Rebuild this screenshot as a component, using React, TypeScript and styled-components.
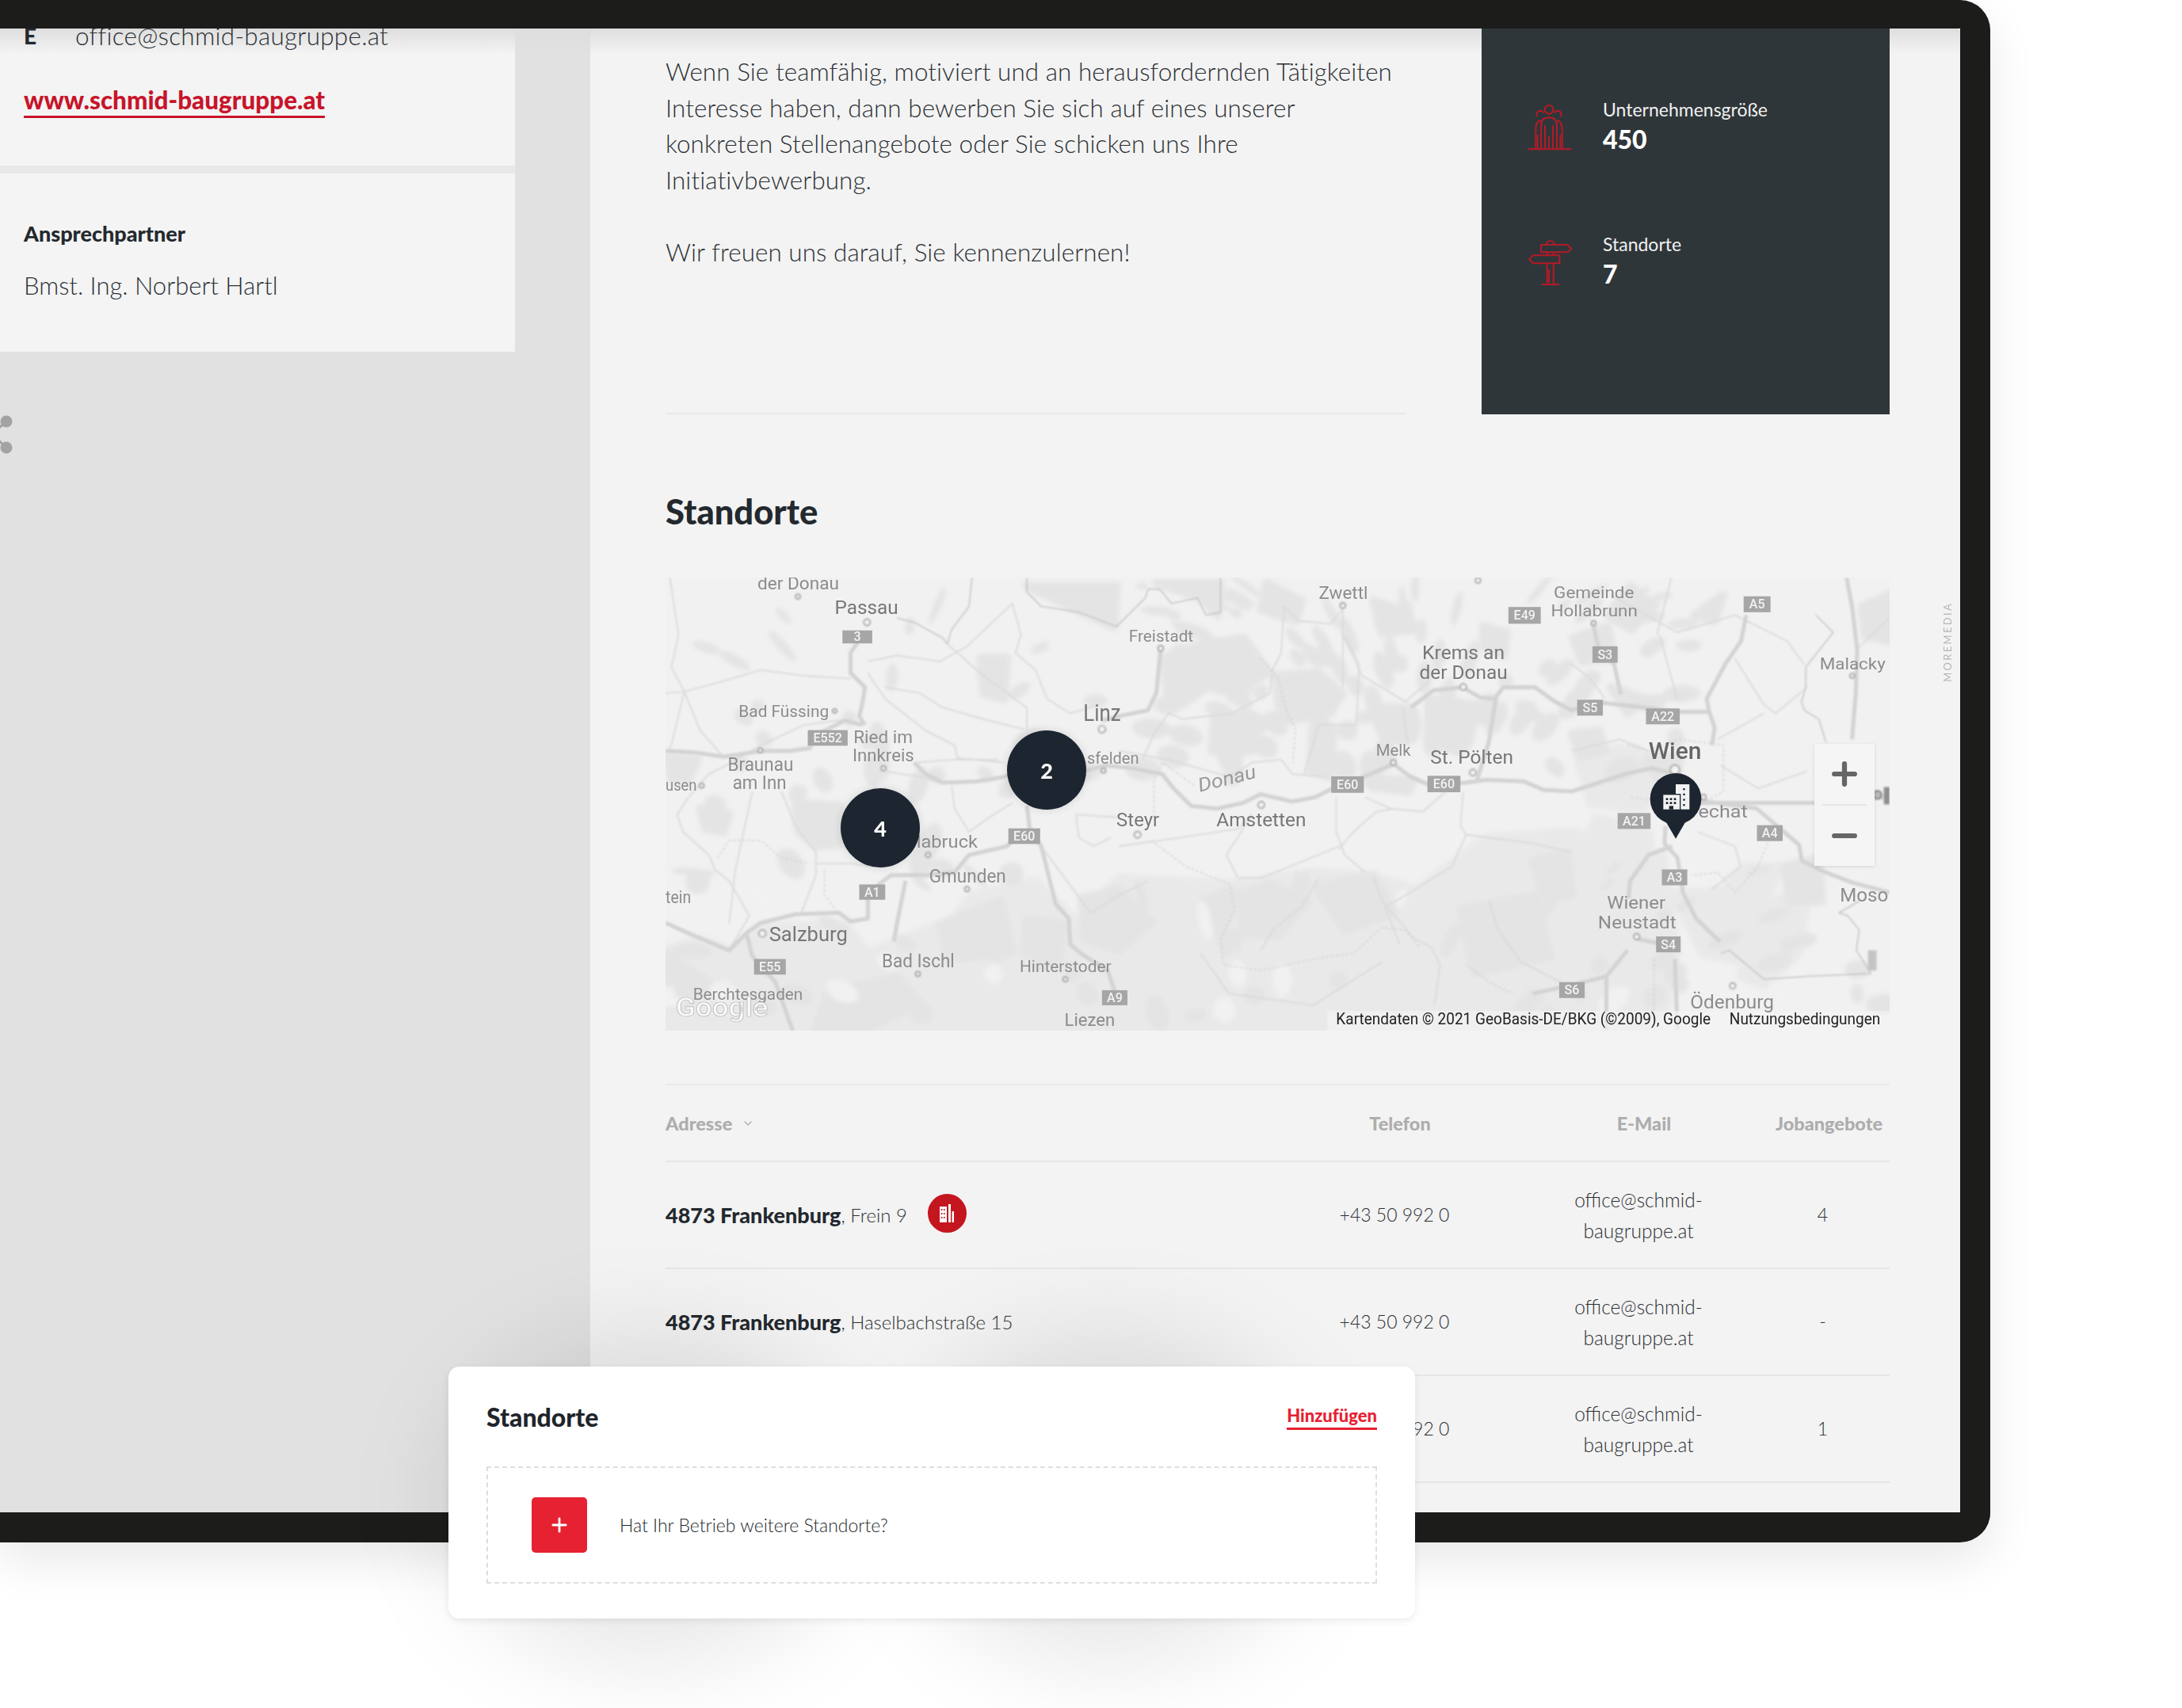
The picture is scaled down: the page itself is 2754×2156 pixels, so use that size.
import React from 'react'
import styled, { createGlobalStyle } from 'styled-components'
import { ChevronDown, Plus, Minus } from 'lucide-react'

const GlobalStyle = createGlobalStyle`
  html, body { margin: 0; padding: 0; background: #fff; }
  body { font-family: Lato, "Open Sans", sans-serif; color: #2b3034; }
`

/* map data, in units of a 4235x1568 canvas */
type Label = { t: string; x: number; y: number; w: number; s: number; c?: string; fw?: number }

const labels: Label[] = [
  { t: 'der Donau', x: 318, y: 42, w: 282, s: 54 },
  { t: 'Passau', x: 585, y: 125, w: 220, s: 60, c: '#777' },
  { t: 'Bad Füssing', x: 253, y: 483, w: 312, s: 52 },
  { t: 'Ried im', x: 650, y: 573, w: 205, s: 56 },
  { t: 'Innkreis', x: 647, y: 637, w: 213, s: 56 },
  { t: 'Braunau', x: 215, y: 668, w: 227, s: 58 },
  { t: 'am Inn', x: 232, y: 731, w: 186, s: 58 },
  { t: 'usen', x: 0, y: 738, w: 108, s: 52 },
  { t: 'Linz', x: 1445, y: 495, w: 130, s: 72, c: '#777' },
  { t: 'sfelden', x: 1458, y: 645, w: 180, s: 52 },
  { t: 'labruck', x: 868, y: 935, w: 212, s: 56 },
  { t: 'Gmunden', x: 912, y: 1055, w: 266, s: 58 },
  { t: 'tein', x: 0, y: 1128, w: 88, s: 56 },
  { t: 'Salzburg', x: 358, y: 1258, w: 272, s: 66, c: '#777' },
  { t: 'Bad Ischl', x: 748, y: 1348, w: 252, s: 58 },
  { t: 'Hinterstoder', x: 1225, y: 1365, w: 317, s: 50 },
  { t: 'Berchtesgaden', x: 95, y: 1462, w: 380, s: 50 },
  { t: 'Liezen', x: 1380, y: 1552, w: 175, s: 54 },
  { t: 'Steyr', x: 1560, y: 862, w: 148, s: 60, c: '#777' },
  { t: 'Amstetten', x: 1906, y: 860, w: 310, s: 60, c: '#777' },
  { t: 'Freistadt', x: 1603, y: 222, w: 223, s: 50 },
  { t: 'Zwettl', x: 2260, y: 73, w: 170, s: 56 },
  { t: 'Melk', x: 2458, y: 617, w: 120, s: 50 },
  { t: 'St. Pölten', x: 2646, y: 645, w: 287, s: 58, c: '#777' },
  { t: 'Krems an', x: 2618, y: 282, w: 285, s: 58, c: '#777' },
  { t: 'der Donau', x: 2608, y: 350, w: 305, s: 58, c: '#777' },
  { t: 'Gemeinde', x: 3073, y: 72, w: 278, s: 50 },
  { t: 'Hollabrunn', x: 3063, y: 135, w: 300, s: 50 },
  { t: 'Malacky', x: 3993, y: 317, w: 228, s: 52 },
  { t: 'Wien', x: 3401, y: 628, w: 183, s: 74, c: '#666', fw: 500 },
  { t: 'Wiener', x: 3257, y: 1147, w: 203, s: 56 },
  { t: 'Neustadt', x: 3226, y: 1215, w: 271, s: 56 },
  { t: 'echat', x: 3573, y: 832, w: 171, s: 54 },
  { t: 'Moso', x: 4063, y: 1120, w: 167, s: 58 },
  { t: 'Ödenburg', x: 3545, y: 1490, w: 290, s: 58 },
]

const shields: [string, number, number, number, number][] = [
  ['3', 612, 183, 715, 228],
  ['E552', 492, 528, 630, 582],
  ['E60', 1186, 868, 1296, 922],
  ['A1', 670, 1062, 760, 1115],
  ['E55', 306, 1320, 416, 1374],
  ['A9', 1510, 1428, 1598, 1480],
  ['E49', 2916, 102, 3028, 160],
  ['E60', 2303, 688, 2416, 745],
  ['E60', 2636, 686, 2750, 743],
  ['S6', 3092, 1400, 3180, 1455],
  ['S3', 3207, 238, 3294, 295],
  ['S5', 3154, 423, 3243, 478],
  ['A22', 3392, 453, 3509, 508],
  ['A5', 3730, 65, 3823, 120],
  ['A21', 3294, 815, 3408, 870],
  ['A4', 3776, 857, 3865, 912],
  ['A3', 3447, 1010, 3535, 1065],
  ['S4', 3427, 1242, 3512, 1297],
]

const places: [number, number, number][] = [
  [458, 66, 8], [697, 155, 11], [585, 462, 7], [328, 598, 8], [125, 720, 8], [754, 660, 8],
  [1510, 525, 12], [1515, 668, 8], [908, 960, 8], [1043, 1078, 8], [335, 1232, 12], [873, 1372, 8],
  [1383, 1390, 8], [1713, 245, 9], [2343, 97, 9], [2811, 10, 9], [2061, 787, 11], [1633, 890, 11],
  [2518, 640, 9], [2793, 675, 11], [2760, 379, 11], [3211, 158, 8], [3492, 665, 16], [4106, 340, 8],
  [3360, 1243, 10], [3692, 1413, 10], [3591, 760, 9],
]

const bigRoads: string[] = [
  '665,225 640,260 640,330 690,380 680,440 670,480 690,510',
  '0,600 100,605 200,620 270,610 330,600 430,600 500,590 520,545 620,495 680,510',
  '860,640 900,680 960,710 1080,705 1170,690 1200,680',
  '1250,790 1260,870 1300,930 1330,1050 1350,1130 1395,1180 1400,1270 1450,1310 1530,1360 1560,1450',
  '1240,880 1180,930 1050,960 1000,1020 900,1030 780,1030 740,1060 700,1110 700,1180 640,1190 600,1160 450,1165 330,1195 280,1230 220,1290 100,1240 0,1195',
  '1450,670 1520,650 1618,660 1718,680 1758,730 1818,790 1908,800 1998,780 2058,750 2168,775 2248,760 2308,730 2438,680 2518,645 2578,690 2648,720 2768,710 2838,700 2968,705 3038,735 3136,740 3320,680 3410,660 3492,680',
  '1713,250 1698,400 1668,460 1568,480 1510,495',
  '2578,450 2658,390 2758,380 2818,415 2868,420 2898,380 3008,380 3078,430 3136,460 3210,430 3390,450 3502,465 3611,465 3630,520 3620,580',
  '2873,420 2848,570 2808,700',
  '3739,130 3721,220 3666,300 3602,420 3611,465',
  '3211,170 3227,240 3282,300 3305,405',
  '3565,770 3776,800 3922,925 3931,980 4013,1020 4105,1055 4235,1090',
  '3570,780 3977,780 4235,760',
  '3460,860 3456,920 3501,970 3520,1090 3565,1180 3648,1260',
  '3483,930 3401,960 3337,1050 3332,1110',
  '3360,1250 3501,1280',
  '3328,1290 3255,1380 3136,1410 3000,1440',
  '3255,1380 3255,1568',
  '3492,1320 3501,1568',
  '4086,0 4105,100 4123,250 4118,400 4105,560',
  '280,1230 300,1310 380,1400 440,1568',
  '830,1050 800,1200 790,1260',
]

const thinRoads: string[] = [
  '0,400 65,395 230,350 330,320 480,340 640,350',
  '65,395 120,530 200,620',
  '15,0 45,200 20,310 65,395 20,580 10,600',
  '700,330 760,420 900,530 1000,580 1010,625 1170,640',
  '760,380 880,400 960,450 1100,490 1240,525',
  '700,290 800,270 950,290 1040,240 1200,90 1230,200 1210,260 1280,320 1320,420 1400,470 1500,440',
  '975,230 1100,340 1250,450 1250,530',
  '630,490 480,510 330,580 210,650 150,680 80,760 40,820 60,880 150,960 170,1010 220,1050 290,1170 220,1290',
  '300,740 270,880 240,1020 220,1200',
  '400,740 450,860 520,950 520,1030 470,1160',
  '520,990 640,990 720,1000',
  '990,720 1000,800 1050,880 1120,830 1200,780',
  '870,640 1000,630 1150,630',
  '755,670 880,690 960,710',
  '1560,830 1420,820 1430,900 1480,930 1540,900',
  '1300,930 1470,1160 1568,1100 1670,1050',
  '1568,600 1740,630 1950,690 2030,640 2130,630 2170,680 2290,690',
  '1650,630 1690,540 1740,470 1790,490 1960,470 2090,400 2100,320 2130,260 2140,100 2190,150 2300,160 2343,110 2343,380',
  '1568,930 1780,900 1980,870 2030,820',
  '2030,820 1940,960 1980,1040 2060,1040 2160,1000 2330,930',
  '2320,760 2320,880 2350,960 2420,1020',
  '2420,760 2510,800 2620,810 2700,740',
  '2330,940 2380,880 2460,810 2520,800',
  '2760,740 2750,860 2770,890 3000,920 3136,950',
  '2770,890 2720,1000 2560,1100 2490,1140 2540,1270',
  '2260,1040 2200,1140 2100,1220 2060,1290',
  '2450,1040 2480,1120 2590,1250 2650,1280 2680,1340 2660,1480',
  '1850,1300 1950,1440 2240,1480 2480,1330',
  '2850,1120 2880,1220 2960,1330 3136,1420',
  '2640,360 2560,430 2410,340 2340,190',
  '2350,200 2400,300 2390,510 2260,510 2210,680',
  '2550,450 2570,580',
  '3136,600 3300,560 3400,600',
  '3136,300 3200,350 3250,420',
  '3270,60 3500,190 3700,130 3880,220 3940,300',
  '3700,280 3800,440 3840,470 3950,380',
  '3640,560 3800,470',
  '3650,650 3780,730 3950,670',
  '3570,880 3700,930 3720,1000 3620,1080',
  '3430,200 3480,0',
  '3440,200 3500,420',
  '4235,140 4120,250',
]

const borders: string[] = [
  '1250,0 1250,50 1300,100 1430,120 1560,170 1660,70 1670,40 1710,40 1750,90 1840,70 1870,130 1920,120 1920,0',
  '800,140 860,155 960,210 975,230 990,180 1050,100 1060,0',
  '3980,130 4040,190 4000,240 3945,310 3945,380 3930,430 3940,460 3990,490 4015,570',
  '3650,1300 3680,1290 3800,1390 3950,1380 4170,1370 4120,1290 4130,1220 4090,1170 4060,1160 4130,1120',
]

const dashes: string[] = [
  '180,970 220,910 330,910 400,970 500,990',
  '550,1010 550,1100 590,1150',
  '1690,830 1690,700 1720,640 1830,720',
  '1680,910 1800,1000 1950,1060 1970,1150 1920,1250 1930,1340 2060,1360 2240,1320 2380,1300 2480,1210 2560,1220 2610,1280',
  '2060,280 2120,350 2150,470 2180,520 2170,640',
  '3330,580 3400,600 3500,560 3660,580 3660,740 3590,780',
  '3340,760 3420,770',
  '3560,1030 3640,1020 3700,1090 3780,1000 3820,900',
  '3420,1320 3420,1500',
  '2770,1340 2850,1400 2930,1440',
]

const lightPatches: string[] = [
  '0,1290 120,1250 220,1290 340,1210 620,1200 700,1300 1000,1180 1060,1100 1280,1050 1420,1190 1568,1040 1960,1060 2240,1020 2430,1030 2600,1080 2840,900 3136,880 3450,960 3500,1300 3450,1568 0,1568',
  '3600,1100 3740,1000 3860,1000 3780,1170 3640,1190',
  '3480,1090 3780,1090 3720,1330 3590,1300',
  '3780,1150 3960,1050 3920,1300 3800,1410 3720,1380',
  '3150,600 3360,590 3460,720 3380,800 3200,780',
  '3220,830 3400,880 3420,1040 3300,1100 3150,1020',
]

const darkPatches: string[] = [
  '450,780 600,790 620,920 520,930 460,880',
  '1720,280 1850,230 2000,210 2090,330 1990,380 1870,380 1790,440 1740,420',
  '2110,340 2260,330 2340,400 2300,470 2130,500',
  '1900,480 2020,470 2060,590 1980,610 1890,600',
  '2240,520 2310,520 2300,690 2230,670',
  '2440,450 2570,450 2570,560 2490,570',
  '2640,420 2810,440 2780,570 2640,540',
  '1250,30 1420,110 1550,170 1560,30',
  '1700,20 1920,20 1910,130 1850,70',
  '2080,20 2200,80 2180,150 2060,110',
  '2450,80 2570,120 2590,180 2480,190',
  '2830,170 2910,190 2900,270 2830,240',
  '3140,210 3260,170 3280,280 3170,290',
  '3340,30 3420,100 3340,180 3260,130',
  '3270,380 3390,420 3330,470',
  '3560,130 3660,60 3630,150',
  '3400,620 3510,620 3500,690 3430,700',
  '3136,540 3230,530 3250,600 3170,620',
  '2480,700 2590,700 2570,740 2480,730',
  '0,620 110,630 80,700 20,700',
  '120,800 220,820 200,880 140,870',
  '1090,280 1180,280 1170,420 1100,400',
  '0,1300 150,1400 60,1490 0,1480',
  '1980,1100 2090,1060 2220,1120 2120,1240 2000,1230',
  '2250,1070 2450,1030 2520,1160 2350,1220',
  '2750,1150 3010,1100 3060,1310 2800,1370',
  '3000,980 3120,950 3136,1100 3040,1100',
  '1250,1180 1380,1200 1360,1330 1240,1300',
  '560,1440 800,1380 880,1470 700,1560 520,1560',
  '950,1200 1160,1120 1200,1300 980,1320',
  '1860,1120 1960,1080 1950,1180 1860,1200',
  '1440,1110 1568,1080 1680,1190 1570,1290 1450,1250',
  '3870,1000 3990,970 4000,1120 3890,1120',
  '4140,100 4235,60 4235,220 4150,200',
]

// small forest specks, fixed pseudo random so the map looks the same every run
const frac = (n: number) => n - Math.floor(n)
const specks = Array.from({ length: 230 }, (_, i) => {
  const a = frac(Math.sin(i * 12.9898) * 43758.5453)
  const b = frac(Math.sin(i * 78.233) * 12543.123)
  const c = frac(Math.sin(i * 39.425) * 9631.77)
  const north = i < 110
  const west = i >= 190
  return {
    x: west ? a * 1500 : north ? 1650 + a * 1900 : a * 4235,
    y: west ? 60 + b * 1000 : north ? 30 + b * 660 : 1000 + b * 560,
    rx: 22 + c * 48,
    ry: 12 + b * 30,
    rot: a * 180,
    light: i % 4 === 0 && !north && !west,
  }
})

type Pin = { n: string; x: number; y: number }
const clusters: Pin[] = [
  { n: '4', x: 271, y: 316 },
  { n: '2', x: 481, y: 243 },
]

const rows = [
  { city: '4873 Frankenburg', street: 'Frein 9', jobs: '4', hq: true },
  { city: '4873 Frankenburg', street: 'Haselbachstraße 15', jobs: '-' },
  { city: '4873 Frankenburg', street: 'Frein 9', jobs: '1' },
]

const Page = styled.div`
  position: relative;
  width: 2754px;
  height: 2156px;
  overflow: hidden;
  background: #fff;
`

const Device = styled.div`
  box-sizing: border-box;
  width: 2512px;
  height: 1947px;
  border-style: solid;
  border-color: #1c1c1b;
  border-width: 36px 38px 38px 0;
  border-radius: 0 38px 38px 0;
  box-shadow: 0 24px 60px rgba(0, 0, 0, 0.09);
`

const Screen = styled.div`
  position: relative;
  display: flex;
  height: 100%;
  overflow: hidden;
  border-radius: 0 4px 4px 0;
  background: #f3f3f3;

  &::after {
    content: '';
    position: absolute;
    inset: 0 0 auto 0;
    height: 32px;
    background: linear-gradient(#dedede, rgba(222, 222, 222, 0));
    pointer-events: none;
  }
`

const Sidebar = styled.aside`
  position: relative;
  flex: 0 0 745px;
  background: #e1e1e1;
`

const SideCard = styled.section<{ $height: number }>`
  box-sizing: border-box;
  width: 650px;
  height: ${p => p.$height}px;
  padding-left: 30px;
  background: #f4f4f4;
  overflow: hidden;
`

const CardGap = styled.div`
  width: 650px;
  height: 10px;
  background: #e8e8e8;
`

const ContactRow = styled.div`
  position: relative;
  z-index: 1;
  display: flex;
  margin-top: -15px;
  font-size: 31.5px;
  line-height: 48px;
  font-weight: 300;
  letter-spacing: 0.25px;
`

const ContactKey = styled.b`
  width: 65px;
  font-weight: 900;
  font-size: 28px;
  color: #23292e;
`

const SiteLink = styled.a`
  display: inline-block;
  margin-top: 37px;
  font-size: 31.4px;
  line-height: 40px;
  font-weight: 900;
  color: #c8142a;
  border-bottom: 3px solid #c8142a;
`

const PersonTitle = styled.div`
  margin-top: 59px;
  font-size: 27px;
  line-height: 34px;
  font-weight: 900;
  color: #23292e;
`

const PersonName = styled.div`
  margin-top: 30px;
  font-size: 31px;
  line-height: 36px;
  font-weight: 300;
`

const ShareIcon = styled.svg`
  position: absolute;
  left: 0;
  top: 485px;
`

const Main = styled.main`
  flex: 1;
  padding: 0 89px 0 95px;
  min-width: 0;
`

const TopRow = styled.div`
  display: flex;
  gap: 95px;
  height: 487px;
`

const Intro = styled.div`
  box-sizing: border-box;
  width: 935px;
  padding-top: 32px;
  border-bottom: 2px solid #e8e8e8;
`

const Paragraph = styled.p`
  margin: 0 0 46px;
  font-size: 31.4px;
  line-height: 45.6px;
  font-weight: 300;
  letter-spacing: 0.08px;
`

const FactPanel = styled.div`
  position: relative;
  z-index: 2;
  box-sizing: border-box;
  flex: 1;
  padding: 84px 0 0 40px;
  background: #2f3639;
  color: #f1f1f1;
`

const Fact = styled.div`
  display: flex;
  align-items: flex-start;
  gap: 23px;
  height: 90px;
  margin-bottom: 80px;
`

const FactLabel = styled.div`
  font-size: 23px;
  line-height: 36px;
  font-weight: 400;
`

const FactValue = styled.div`
  font-size: 32px;
  line-height: 40px;
  font-weight: 900;
  color: #fff;
`

const SectionTitle = styled.h2`
  margin: 97px 0 59px;
  font-size: 43.5px;
  line-height: 50px;
  font-weight: 900;
  color: #23292e;
`

const MapBox = styled.div`
  position: relative;
  height: 572px;
  overflow: hidden;
  background: #f1f1f1;
`

const MapArt = styled.svg`
  display: block;
  font-family: Roboto, "Liberation Sans", sans-serif;
`

const MapLabel = styled.text<{ $fill?: string }>`
  fill: ${p => p.$fill ?? '#8c8c8c'};
`

const ShieldText = styled.text`
  fill: #f3f3f3;
  font-size: 44px;
  font-weight: 500;
  text-anchor: middle;
`

const Cluster = styled.div`
  position: absolute;
  display: flex;
  align-items: center;
  justify-content: center;
  width: 100px;
  height: 100px;
  margin: -50px 0 0 -50px;
  border-radius: 50%;
  background: #1c2530;
  box-shadow: 0 0 12px rgba(0, 0, 0, 0.12);
  color: #fff;
  font-size: 27px;
  font-weight: 900;
`

const BuildingPin = styled.svg`
  position: absolute;
  left: 1230px;
  top: 231px;
`

const ZoomBox = styled.div`
  position: absolute;
  right: 19px;
  top: 210px;
  display: flex;
  flex-direction: column;
  width: 76px;
  height: 154px;
  background: #f5f5f5;
  box-shadow: 0 1px 4px rgba(0, 0, 0, 0.12);
  color: #666;
`

const ZoomButton = styled.div`
  flex: 1;
  display: flex;
  align-items: center;
  justify-content: center;

  & + & {
    margin: 0 10px;
    border-top: 2px solid #e6e6e6;
  }
`

const Table = styled.div`
  margin-top: 67px;
  border-top: 2px solid #e9e9e9;
`

const Row = styled.div<{ $height: number }>`
  box-sizing: border-box;
  display: grid;
  grid-template-columns: 760px 320px 296px 169px;
  align-items: center;
  height: ${p => p.$height}px;
  border-bottom: 2px solid #e6e6e6;
`

const HeadCell = styled.div<{ $shift?: number }>`
  display: flex;
  align-items: center;
  justify-content: ${p => (p.$shift === undefined ? 'flex-start' : 'center')};
  gap: 12px;
  padding-left: ${p => p.$shift ?? 0}px;
  font-size: 23.5px;
  font-weight: 900;
  color: #adadad;
`

const AddressCell = styled.div`
  display: flex;
  align-items: center;
  font-size: 24px;
  font-weight: 300;
`

const City = styled.b`
  font-size: 27px;
  font-weight: 900;
  color: #23292e;
`

const Comma = styled.span`
  white-space: pre;
`

const HqBadge = styled.span`
  display: flex;
  align-items: center;
  justify-content: center;
  width: 49px;
  height: 49px;
  margin: -4px 0 0 26px;
  border-radius: 50%;
  background: #c4161f;
`

const Cell = styled.div<{ $size?: number }>`
  justify-self: center;
  max-width: 190px;
  text-align: center;
  font-size: ${p => p.$size ?? 23}px;
  line-height: 39px;
  font-weight: 300;
`

const ShadowBlob = styled.div<{ $left: number }>`
  position: absolute;
  left: ${p => p.$left}px;
  top: 1680px;
  width: 520px;
  height: 420px;
  border-radius: 50%;
  background: rgba(0, 0, 0, 0.09);
  filter: blur(60px);
`

const FormCard = styled.section`
  position: absolute;
  left: 566px;
  top: 1725px;
  box-sizing: border-box;
  width: 1220px;
  height: 318px;
  padding: 44px 48px 0;
  border-radius: 14px;
  background: #fff;
  box-shadow: 0 3px 10px rgba(0, 0, 0, 0.08);
`

const FormHead = styled.div`
  display: flex;
  justify-content: space-between;
  align-items: flex-start;
  height: 82px;
`

const FormTitle = styled.h3`
  margin: 0;
  font-size: 32px;
  line-height: 40px;
  font-weight: 900;
  color: #1f252b;
`

const AddLink = styled.a`
  margin-top: 3px;
  font-size: 22px;
  line-height: 30px;
  font-weight: 900;
  color: #e62132;
  border-bottom: 3px solid #e62132;
`

const DropZone = styled.div`
  box-sizing: border-box;
  display: flex;
  align-items: center;
  gap: 41px;
  height: 148px;
  padding-left: 55px;
  border: 2px dashed #dedede;
`

const AddButton = styled.div`
  display: flex;
  align-items: center;
  justify-content: center;
  width: 70px;
  height: 70px;
  border-radius: 5px;
  background: #e62132;
  color: #fff;
`

const DropText = styled.span`
  font-size: 23px;
  font-weight: 300;
  color: #23282c;
`

const Credit = styled.div`
  position: absolute;
  left: 2450px;
  top: 760px;
  writing-mode: vertical-rl;
  transform: rotate(180deg);
  font-size: 13px;
  letter-spacing: 2.3px;
  color: #b5b5b5;
`

function GroupIcon() {
  return (
    <svg width="90" height="90" viewBox="0 0 270 270" fill="none" stroke="#b51a28" strokeWidth="6">
      <path d="M55 205H220" />
      <circle cx="135" cy="55" r="16" />
      <path d="M115 68a14 14 0 1 0-24 14M155 68a14 14 0 1 1 24 14" />
      <path d="M105 205V115q0-30 30-30t30 30v90" />
      <path d="M120 205V115M150 205V115M135 205V155" />
      <path d="M105 95q-20 5-20 35v75M165 95q20 5 20 35v75" />
      <path d="M92 205V150M178 205V150" />
    </svg>
  )
}

function SignIcon() {
  return (
    <svg width="90" height="90" viewBox="0 0 270 270" fill="none" stroke="#b51a28" strokeWidth="6">
      <path d="M125 57a15 15 0 0 1 30 0" />
      <path d="M105 57H205L220 71 205 85H105Z" strokeLinejoin="round" />
      <path d="M175 97H75L60 112 75 127H175Z" strokeLinejoin="round" />
      <path d="M128 85V97M152 85V97M128 127V205M152 127V205M135 150V200" />
      <path d="M106 207H174" />
    </svg>
  )
}

function BuildingMini() {
  return (
    <svg width="22" height="26" viewBox="0 0 22 26" fill="#fff">
      <path d="M2 4h9v20H2zM13 1h3v23h-3zM17.5 10H20v14h-2.5z" />
      <path fill="#c4161f" d="M4 7h1.5v2H4zM7 7h1.5v2H7zM4 12h1.5v2H4zM7 12h1.5v2H7zM4 17h1.5v2H4zM7 17h1.5v2H7z" />
    </svg>
  )
}

function MapSurface() {
  return (
    <MapArt width="1545" height="572" viewBox="0 0 4235 1568">
      <defs>
        <filter id="soft" x="-2%" y="-2%" width="104%" height="104%">
          <feGaussianBlur stdDeviation="2.6" />
        </filter>
        <filter id="softer" x="-2%" y="-2%" width="104%" height="104%">
          <feGaussianBlur stdDeviation="7" />
        </filter>
      </defs>
      <g filter="url(#softer)" strokeLinejoin="round">
        {lightPatches.map((p, i) => <polygon key={i} points={p} fill="#e9e9e9" stroke="#e9e9e9" strokeWidth="30" />)}
        {darkPatches.map((p, i) => <polygon key={i} points={p} fill="#e4e4e4" stroke="#e4e4e4" strokeWidth="30" />)}
        {specks.map((s, i) => (
          <ellipse key={i} cx={s.x} cy={s.y} rx={s.rx} ry={s.ry} fill={s.light ? '#f1f1f1' : '#e4e4e4'}
            transform={`rotate(${s.rot} ${s.x} ${s.y})`} />
        ))}
      </g>
      <g filter="url(#soft)" strokeLinejoin="round">
        {thinRoads.map((p, i) => <polyline key={i} points={p} fill="none" stroke="#dadada" strokeWidth="5" />)}
        {bigRoads.map((p, i) => <polyline key={i} points={p} fill="none" stroke="#d3d3d3" strokeWidth="14" />)}
        {borders.map((p, i) => <polyline key={i} points={p} fill="none" stroke="#bdbdbd" strokeWidth="3.5" />)}
        {dashes.map((p, i) => <polyline key={i} points={p} fill="none" stroke="#cdcdcd" strokeWidth="3.5" strokeDasharray="8 9" />)}
        {places.map(([x, y, r], i) => (
          <circle key={i} cx={x} cy={y} r={r} fill="#f2f2f2" stroke="#8e8e8e" strokeWidth="4" />
        ))}
        <rect x="4160" y="1290" width="30" height="70" fill="#c4c4c4" />
        <rect x="4215" y="725" width="20" height="60" fill="#8e8e8e" />
        <circle cx="4193" cy="752" r="14" fill="#bbb" stroke="#777" strokeWidth="5" />
      </g>
      <rect x="2290" y="1500" width="1945" height="68" fill="#f5f5f5" opacity="0.65" />
      {shields.map(([t, x1, y1, x2, y2], i) => (
        <g key={i}>
          <rect x={x1} y={y1} width={x2 - x1} height={y2 - y1} fill="#a6a6a6" />
          <ShieldText x={(x1 + x2) / 2} y={(y1 + y2) / 2 + 15}>{t}</ShieldText>
        </g>
      ))}
      {labels.map(l => (
        <MapLabel key={l.t + l.x} x={l.x} y={l.y} fontSize={l.s * 1.1} fontWeight={l.fw ?? 400}
          textLength={l.w} lengthAdjust="spacingAndGlyphs" $fill={l.c}>
          {l.t}
        </MapLabel>
      ))}
      <MapLabel x="1848" y="742" fontSize="66" fontStyle="italic" transform="rotate(-14 1848 742)"
        textLength="205" lengthAdjust="spacingAndGlyphs" $fill="#999">Donau</MapLabel>
      <MapLabel x="35" y="1520" fontSize="92" fontWeight={500} textLength="320" lengthAdjust="spacingAndGlyphs"
        $fill="#fafafa" stroke="#b5b5b5" strokeWidth="2">Google</MapLabel>
      <MapLabel x="2320" y="1545" fontSize="54" textLength="1296" lengthAdjust="spacingAndGlyphs" $fill="#222">Kartendaten © 2021 GeoBasis-DE/BKG (©2009), Google</MapLabel>
      <MapLabel x="3681" y="1545" fontSize="54" textLength="522" lengthAdjust="spacingAndGlyphs" $fill="#222">Nutzungsbedingungen</MapLabel>
    </MapArt>
  )
}

export default function App() {
  return (
    <Page>
      <GlobalStyle />
      <Device>
        <Screen>
          <Sidebar>
            <SideCard $height={173}>
              <ContactRow>
                <ContactKey>E</ContactKey>
                <span>office@schmid-baugruppe.at</span>
              </ContactRow>
              <SiteLink>www.schmid-baugruppe.at</SiteLink>
            </SideCard>
            <CardGap />
            <SideCard $height={225}>
              <PersonTitle>Ansprechpartner</PersonTitle>
              <PersonName>Bmst. Ing. Norbert Hartl</PersonName>
            </SideCard>
            <ShareIcon width="20" height="60" viewBox="0 0 20 60" fill="#a3a3a3" stroke="#a3a3a3" strokeWidth="3">
              <path d="M8 11L-10 27 8 44" fill="none" />
              <circle cx="8" cy="11" r="6" />
              <circle cx="8" cy="44" r="6" />
            </ShareIcon>
          </Sidebar>
          <Main>
            <TopRow>
              <Intro>
                <Paragraph>
                  Wenn Sie teamfähig, motiviert und an herausfordernden Tätigkeiten<br />
                  Interesse haben, dann bewerben Sie sich auf eines unserer<br />
                  konkreten Stellenangebote oder Sie schicken uns Ihre<br />
                  Initiativbewerbung.
                </Paragraph>
                <Paragraph>Wir freuen uns darauf, Sie kennenzulernen!</Paragraph>
              </Intro>
              <FactPanel>
                <Fact>
                  <GroupIcon />
                  <div>
                    <FactLabel>Unternehmensgröße</FactLabel>
                    <FactValue>450</FactValue>
                  </div>
                </Fact>
                <Fact>
                  <SignIcon />
                  <div>
                    <FactLabel>Standorte</FactLabel>
                    <FactValue>7</FactValue>
                  </div>
                </Fact>
              </FactPanel>
            </TopRow>
            <SectionTitle>Standorte</SectionTitle>
            <MapBox>
              <MapSurface />
              {clusters.map(c => (
                <Cluster key={c.n} style={{ left: c.x, top: c.y }}>{c.n}</Cluster>
              ))}
              <BuildingPin width="100" height="100" viewBox="0 0 300 300">
                <circle cx="135" cy="145" r="97" fill="#1c2530" />
                <path d="M92 222L135 296 178 222Z" fill="#1c2530" />
                <rect x="135" y="90" width="52" height="95" fill="#f2f2f2" />
                <rect x="84" y="126" width="70" height="63" fill="#1c2530" />
                <rect x="88" y="130" width="62" height="55" fill="#f2f2f2" />
                <g fill="#1c2530">
                  <rect x="98" y="142" width="8" height="8" /><rect x="113" y="142" width="8" height="8" /><rect x="128" y="142" width="8" height="8" />
                  <rect x="98" y="157" width="8" height="8" /><rect x="113" y="157" width="8" height="8" /><rect x="128" y="157" width="8" height="8" />
                  <rect x="110" y="172" width="16" height="13" />
                  <rect x="163" y="105" width="7" height="7" /><rect x="163" y="125" width="7" height="7" />
                  <rect x="163" y="145" width="7" height="7" /><rect x="163" y="165" width="7" height="7" />
                </g>
              </BuildingPin>
              <ZoomBox>
                <ZoomButton><Plus size={44} strokeWidth={3.4} /></ZoomButton>
                <ZoomButton><Minus size={44} strokeWidth={3.4} /></ZoomButton>
              </ZoomBox>
            </MapBox>
            <Table>
              <Row $height={97}>
                <HeadCell>Adresse <ChevronDown size={16} /></HeadCell>
                <HeadCell $shift={14}>Telefon</HeadCell>
                <HeadCell $shift={14}>E-Mail</HeadCell>
                <HeadCell $shift={16}>Jobangebote</HeadCell>
              </Row>
              {rows.map((r, i) => (
                <Row key={i} $height={135}>
                  <AddressCell>
                    <City>{r.city}</City>
                    <Comma>, {r.street}</Comma>
                    {r.hq && <HqBadge><BuildingMini /></HqBadge>}
                  </AddressCell>
                  <Cell>+43 50 992 0</Cell>
                  <Cell $size={24.5}>office@schmid-baugruppe.at</Cell>
                  <Cell>{r.jobs}</Cell>
                </Row>
              ))}
            </Table>
          </Main>
        </Screen>
      </Device>
      <Credit>MOREMEDIA</Credit>
      <ShadowBlob $left={560} />
      <ShadowBlob $left={1140} />
      <FormCard>
        <FormHead>
          <FormTitle>Standorte</FormTitle>
          <AddLink>Hinzufügen</AddLink>
        </FormHead>
        <DropZone>
          <AddButton><Plus size={28} strokeWidth={2.4} /></AddButton>
          <DropText>Hat Ihr Betrieb weitere Standorte?</DropText>
        </DropZone>
      </FormCard>
    </Page>
  )
}
